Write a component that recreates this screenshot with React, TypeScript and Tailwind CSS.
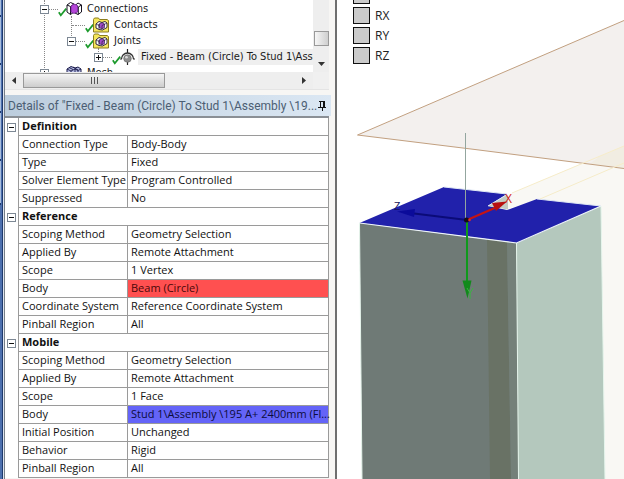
import clsx from 'clsx'
import { ReactNode } from 'react'

type Tone = 'plain' | 'red' | 'blue'

interface Property {
  name: string
  value: string
  tone?: Tone
}

interface PropertyGroup {
  title: string
  rows: Property[]
}

const groups: PropertyGroup[] = [
  {
    title: 'Definition',
    rows: [
      { name: 'Connection Type', value: 'Body-Body' },
      { name: 'Type', value: 'Fixed' },
      { name: 'Solver Element Type', value: 'Program Controlled' },
      { name: 'Suppressed', value: 'No' },
    ],
  },
  {
    title: 'Reference',
    rows: [
      { name: 'Scoping Method', value: 'Geometry Selection' },
      { name: 'Applied By', value: 'Remote Attachment' },
      { name: 'Scope', value: '1 Vertex' },
      { name: 'Body', value: 'Beam (Circle)', tone: 'red' },
      { name: 'Coordinate System', value: 'Reference Coordinate System' },
      { name: 'Pinball Region', value: 'All' },
    ],
  },
  {
    title: 'Mobile',
    rows: [
      { name: 'Scoping Method', value: 'Geometry Selection' },
      { name: 'Applied By', value: 'Remote Attachment' },
      { name: 'Scope', value: '1 Face' },
      { name: 'Body', value: 'Stud 1\\Assembly \\195 A+ 2400mm (Fl...', tone: 'blue' },
      { name: 'Initial Position', value: 'Unchanged' },
      { name: 'Behavior', value: 'Rigid' },
      { name: 'Pinball Region', value: 'All' },
    ],
  },
]

const toneClass: Record<Tone, string> = {
  plain: 'bg-white',
  red: 'bg-[#ff5050] text-[#4a0808]',
  blue: 'bg-[#6464f8] text-[#0c0c3c]',
}

function Expander({ open, label }: { open: boolean; label: string }) {
  return (
    <button type="button" aria-label={label} aria-expanded={open} className="block h-[9px] w-[9px] shrink-0 bg-white">
      <svg viewBox="0 0 9 9" className="block h-full w-full" shapeRendering="crispEdges">
        <path d="M.5.5h8v8h-8z" fill="none" stroke="#7d8894" />
        <path d="M2 4.5h5" stroke="#111" />
        {!open && <path d="M4.5 2v5" stroke="#111" />}
      </svg>
    </button>
  )
}

function Check() {
  return (
    <svg viewBox="0 0 8 16" className="h-4 w-2 shrink-0 overflow-visible" aria-hidden="true">
      <path d="M.8 11.2l2 3L8.2 7.6" fill="none" stroke="#1c9a2c" strokeWidth="1.7" />
    </svg>
  )
}

function ConnectionsIcon() {
  return (
    <svg viewBox="0 0 16 16" className="h-4 w-4 shrink-0" aria-hidden="true">
      <path d="M1 4l3.500-2.500L8 3v8l-3.500 2.500L1 11z" fill="#fff" stroke="#15101f" />
      <path d="M1 4l3.500 1.500L8 3M4.500 5.500v8" fill="none" stroke="#15101f" />
      <path d="M9 4.500L12 2l3.500 2v7L12 13.500 9 12z" fill="#fff" stroke="#15101f" />
      <path d="M9 4.500l3.300 1.500 3.200-2M12.300 6v7.500" fill="none" stroke="#15101f" />
      <path d="M5 5l3-2 3.500 1.500V11L8 12.500 5 11z" fill="#b445d8" stroke="#6d1f92" strokeWidth=".8" />
    </svg>
  )
}

function FolderIcon() {
  return (
    <svg viewBox="0 0 16 16" className="h-4 w-4 shrink-0" aria-hidden="true">
      <path d="M.5 15V2.500l1-1.500h4l1 1.500h7.500l1.500 1V15z" fill="#f4e65c" stroke="#8b7d1d" />
      <path d="M3 7l3-2.500 3 1 3-1 2 1.500v4.500L9.500 13 6 12.500 3 11z" fill="#fff" stroke="#1b1030" strokeWidth=".9" />
      <path d="M6 7l3-1.500L11.500 7v3.500L9 12l-3-1.500z" fill="#a04cc9" stroke="#1b1030" strokeWidth=".6" />
      <path d="M3 7l3 1.500M6 7v5M9 8.500l5-2.500M9 8.500V12" fill="none" stroke="#1b1030" strokeWidth=".6" />
    </svg>
  )
}

function JointIcon() {
  return (
    <svg viewBox="0 0 16 16" className="h-4 w-4 shrink-0" aria-hidden="true">
      <path d="M7.500 0v4M7.500 13v3" stroke="#222" strokeWidth="1.200" />
      <path d="M1.500 10A6 6 0 0 1 13.500 10" fill="none" stroke="#333" strokeWidth="1.300" />
      <path d="M0 10h2M13 10h2" stroke="#333" />
      <circle cx="7.500" cy="9.500" r="3.800" fill="#8d8d8d" stroke="#5f5f5f" strokeWidth=".6" />
      <circle cx="6.500" cy="8.300" r="1.300" fill="#dcdcdc" />
    </svg>
  )
}

function MeshIcon() {
  return (
    <svg viewBox="0 0 16 16" className="h-4 w-4 shrink-0" aria-hidden="true">
      <path d="M1 4l4-2.500 4 1.500 3-1 3 2v8l-4 2-4-1-3 1-3-2z" fill="#b9bfe6" stroke="#1a1a4a" />
      <path d="M1 4l4 2 4-2 3 1.500 3-1.500M5 6v7M9 4v9M12 5.500V13M1 8l4 2 4-2 3 1.500L15 8M3 2.500l4 2M7 2l5 3" fill="none" stroke="#1a1a4a" strokeWidth=".9" />
    </svg>
  )
}

interface TreeRowProps {
  label: string
  icon: ReactNode
  indent: string
  expander?: 'open' | 'closed'
  checked?: boolean
  selected?: boolean
}

function TreeRow({ label, icon, indent, expander, checked = true, selected }: TreeRowProps) {
  return (
    <li className={clsx('relative flex h-4 items-center', indent)}>
      {expander ? (
        <Expander open={expander === 'open'} label={label} />
      ) : (
        <span className="flex w-[9px] shrink-0 justify-end">
          <span className="w-1 border-t border-dotted border-[#888]" />
        </span>
      )}
      <span className="w-[9px] shrink-0 border-t border-dotted border-[#888]" />
      {checked ? <Check /> : <span className="w-2 shrink-0" />}
      {icon}
      <span className={clsx('ml-[2px] h-4 flex-1 pl-[3px] leading-4 whitespace-nowrap', selected && 'bg-[#efefef]')}>
        {label}
      </span>
    </li>
  )
}

function ProjectTree() {
  return (
    <div className="grid grid-cols-[minmax(0,1fr)_16px] grid-rows-[72px_17px] border-b border-[#e4e4e4]">
      <ul className="relative overflow-hidden bg-white pt-px font-['DejaVu_Sans_Condensed','Open_Sans',sans-serif] text-[11px] text-[#1a1a1a]">
        {/* Branch lines */}
        <li aria-hidden="true" className="absolute top-0 left-[39px] h-full border-l border-dotted border-[#888]" />
        <li aria-hidden="true" className="absolute top-4 left-[66px] h-6 border-l border-dotted border-[#888]" />
        <li aria-hidden="true" className="absolute top-12 left-[93px] h-2 border-l border-dotted border-[#888]" />
        <TreeRow label="Connections" icon={<ConnectionsIcon />} indent="pl-[35px]" expander="open" />
        <TreeRow label="Contacts" icon={<FolderIcon />} indent="pl-[62px]" />
        <TreeRow label="Joints" icon={<FolderIcon />} indent="pl-[62px]" expander="open" />
        <TreeRow
          label="Fixed - Beam (Circle) To Stud 1\Assembly"
          icon={<JointIcon />}
          indent="pl-[89px]"
          expander="closed"
          selected
        />
        <TreeRow label="Mesh" icon={<MeshIcon />} indent="pl-[35px]" expander="closed" checked={false} />
      </ul>

      {/* Vertical scroll bar */}
      <div className="flex flex-col items-center justify-end gap-[10px] bg-[#eeeeee]">
        <div className="h-[15px] w-[15px] border border-[#999] bg-linear-to-r from-[#f6f6f6] to-[#cfcfcf]" />
        <button type="button" aria-label="Scroll down" className="flex h-4 w-4 items-center justify-center">
          <svg viewBox="0 0 7 4" className="h-1 w-[7px]">
            <path d="M0 0h7L3.500 4z" fill="#333" />
          </svg>
        </button>
      </div>

      {/* Horizontal scroll bar */}
      <div className="flex items-center bg-[#eeeeee]">
        <button type="button" aria-label="Scroll left" className="flex h-4 w-[18px] items-center justify-center">
          <svg viewBox="0 0 4 7" className="h-[7px] w-1">
            <path d="M4 0v7L0 3.500z" fill="#333" />
          </svg>
        </button>
        <div className="flex h-[15px] w-[142px] items-center justify-center gap-[2px] border border-[#999] bg-linear-to-b from-[#f5f5f5] to-[#cdcdcd]">
          <span className="h-[7px] w-px bg-[#555]" />
          <span className="h-[7px] w-px bg-[#555]" />
          <span className="h-[7px] w-px bg-[#555]" />
        </div>
        <button type="button" aria-label="Scroll right" className="ml-auto flex h-4 w-[18px] items-center justify-center">
          <svg viewBox="0 0 4 7" className="h-[7px] w-1">
            <path d="M0 0v7l4-3.500z" fill="#333" />
          </svg>
        </button>
      </div>
      <div className="bg-[#f0f0f0]" />
    </div>
  )
}

function DetailsHeader() {
  return (
    <header className="mt-[5px] -mr-[2px] flex h-[21px] items-center justify-between bg-linear-to-r from-[#bccddd] to-[#dbe7f3] pr-[5px] pl-[3px]">
      <h2 className="font-[Roboto,'Open_Sans',sans-serif] text-[12px] whitespace-nowrap text-[#4c5e73]">
        Details of "Fixed - Beam (Circle) To Stud 1\Assembly \19...
      </h2>
      <button type="button" aria-label="Auto hide" className="shrink-0">
        <svg viewBox="0 0 8 10" className="h-[10px] w-2" shapeRendering="crispEdges">
          <path d="M1 .5h6M2.500 0v6M0 6.500h8M4 6v4" fill="none" stroke="#111" />
          <path d="M5 1h1.500v5H5z" fill="#111" />
        </svg>
      </button>
    </header>
  )
}

function DetailsTable() {
  return (
    <table className="w-full table-fixed border-separate border-spacing-0 border-t-2 border-[#8a8f95] bg-white text-[11px] text-[#111]">
      <colgroup>
        <col className="w-[14px]" />
        <col className="w-[109px]" />
        <col />
      </colgroup>
      {groups.map((group) => (
        <tbody key={group.title}>
          <tr className="h-[18px]">
            <td className="border-r border-[#9a9a9a] p-0 pl-[2px]">
              <Expander open label={group.title} />
            </td>
            <th
              colSpan={2}
              scope="rowgroup"
              className="border-r border-b border-[#9a9a9a] p-0 pl-[3px] text-left align-top leading-4 font-bold"
            >
              {group.title}
            </th>
          </tr>
          {group.rows.map((row) => (
            <tr key={row.name} className="h-[18px]">
              <td className="border-r border-[#9a9a9a] p-0" />
              <th
                scope="row"
                className="border-r border-b border-[#9a9a9a] p-0 pl-[3px] text-left align-top leading-4 font-normal whitespace-nowrap"
              >
                {row.name}
              </th>
              <td
                className={clsx(
                  'border-r border-b border-[#9a9a9a] p-0 pl-[3px] align-top leading-4 whitespace-nowrap',
                  toneClass[row.tone ?? 'plain'],
                )}
              >
                {row.value}
              </td>
            </tr>
          ))}
        </tbody>
      ))}
    </table>
  )
}

function DockStrip() {
  return (
    <div className="flex w-[5px] shrink-0 border-r border-[#777f88] bg-[#dfe5ee]">
      <div className="w-[3px] border-r border-[#1f3a6e] bg-[#4d70ae]">
        {[0, 1, 2, 3].map((i) => (
          <div
            key={i}
            className={clsx('w-px border-b-2 border-[#1f3a6e] bg-[#a9bedd]', i === 0 ? 'h-[17px]' : 'h-12')}
          />
        ))}
        <div className="h-11 w-px border-b-2 border-[#1f3a6e] bg-[#a9bedd]" />
      </div>
    </div>
  )
}

function Scene() {
  return (
    <svg
      viewBox="337 0 287 479"
      preserveAspectRatio="xMinYMin slice"
      className="absolute inset-0 h-full w-full"
      fontFamily="'Open Sans', sans-serif"
      role="img"
      aria-label="Joint geometry"
    >
      {/* Translucent beam behind the stud */}
      <path d="M505 196L613 150l11-4v333H600L540 199l-33 10z" fill="#f9f8f4" />
      {/* Upper plane */}
      <path d="M357.500 135L624 20.500V168.500L475 149.500z" fill="#f3f0ee" />
      <path d="M600 156l24-10v22l-34-4z" fill="#f1ede2" />
      <path d="M624 20.500L357.500 135 475 149.500 624 168.500" fill="none" stroke="#c2a080" />
      <path d="M512 193L624 146M540 199l84-36" fill="none" stroke="#f6ecc9" />

      {/* Stud */}
      <path d="M359.500 223L516.500 243 518.500 479H362z" fill="#6f7a76" />
      <path d="M487 239l20 2.500L511 479H490z" fill="#697265" />
      <path d="M507 241.500l9.500 1.500 2 236H511z" fill="#748079" />
      <path d="M516.500 243L601 206l4 273H518.500z" fill="#b4c8bd" />
      <path d="M359.500 223L444 187l63 7-19 12 19 4 30-11 64 7-84 37z" fill="#2121ab" />
      <path d="M488 206l19-11.500 1 1v14z" fill="#c3cbc4" />
      <path d="M488 206l19-11.500M444 187l63 7M537 199l64 7" fill="none" stroke="#dfe8f4" />
      <path d="M359.500 223L516.500 243 601 206" fill="none" stroke="#eef5f8" strokeWidth="1.200" />
      <path d="M516.500 243l2 236M601 206l4 273M359.500 223l2.500 256" fill="none" stroke="#e6f5ec" />
      <path d="M465.500 133v87" stroke="#93a69f" />

      {/* Joint axes */}
      <path d="M467 220L410 213" stroke="#0b0b78" strokeWidth="2" />
      <path d="M397 211.500l18-2.500-1 8z" fill="#0b0b9a" />
      <path d="M467 220l30-13" stroke="#c41414" strokeWidth="2.200" />
      <path d="M507 201.500l-15 1.500 4 8z" fill="#b81010" />
      <path d="M467 220v62" stroke="#109a1c" strokeWidth="2" />
      <path d="M462.500 280.500h9l-4 18z" fill="#128a1c" />
      <path d="M467 288l3 5 3-5M470 293v6" fill="none" stroke="#36b83e" />
      <circle cx="466.500" cy="220" r="2.500" fill="#150c18" />
      <circle cx="469.500" cy="220" r="1.300" fill="#e02a2a" />
      <text x="394" y="210" fontSize="11" fill="#14145a">Z</text>
      <text x="505" y="203" fontSize="12" fill="#d01a1a">X</text>
    </svg>
  )
}

function Viewport() {
  return (
    <main className="relative min-w-0 flex-1 overflow-hidden bg-white">
      <Scene />
      {/* Degrees of freedom legend */}
      <div className="absolute -top-[13px] left-4 flex flex-col gap-[3px] text-[12px] text-[#222]">
        {['', 'RX', 'RY', 'RZ'].map((name) => (
          <label key={name} className="flex h-[17px] items-center gap-[5px]">
            <input
              type="checkbox"
              aria-label={name || 'Z'}
              className="h-[17px] w-[17px] appearance-none border border-[#111] bg-[#cbcbcb]"
            />
            {name}
          </label>
        ))}
      </div>
    </main>
  )
}

export default function App() {
  return (
    <div className="flex min-h-screen bg-white font-['Open_Sans',sans-serif]">
      <DockStrip />
      <aside className="w-[332px] shrink-0 border-r-2 border-[#6f6f6f] bg-[#f7f6f4] pr-[6px]">
        <ProjectTree />
        <DetailsHeader />
        <DetailsTable />
      </aside>
      <Viewport />
    </div>
  )
}
